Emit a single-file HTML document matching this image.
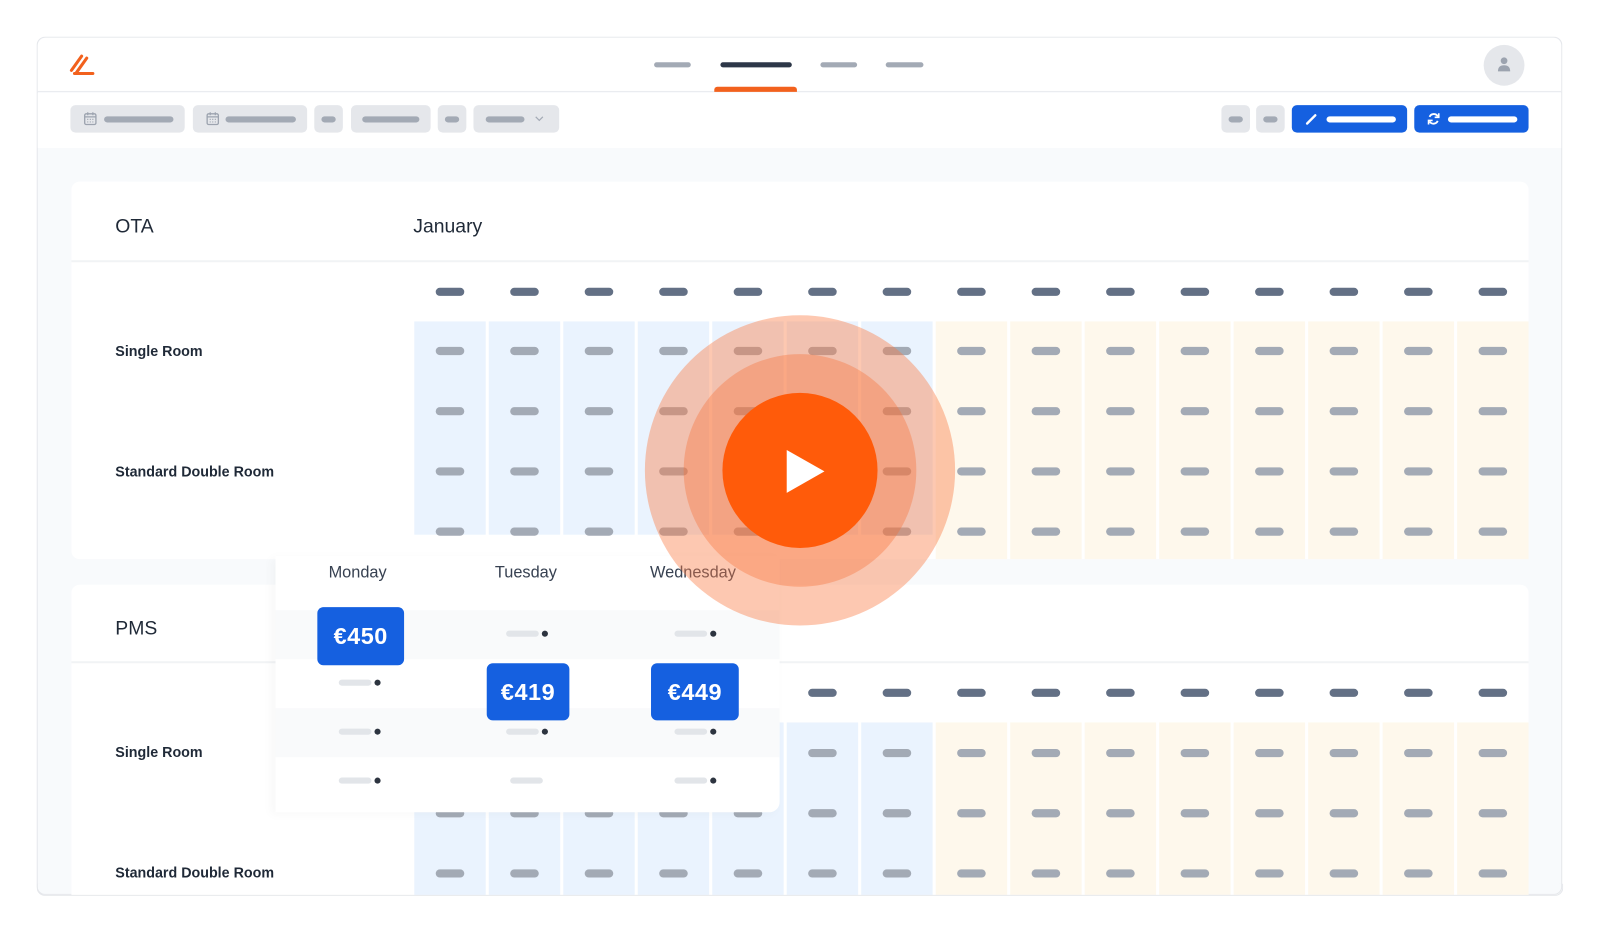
<!DOCTYPE html>
<html><head><meta charset="utf-8">
<style>
*{margin:0;padding:0;box-sizing:border-box}
html,body{width:1600px;height:932px;overflow:hidden;background:#fff;font-family:"Liberation Sans",sans-serif}
#s{position:absolute;left:0;top:0;width:1568px;height:914px;transform:scale(1.0204);transform-origin:0 0}
.a{position:absolute}
.d{position:absolute;height:8px;border-radius:4px}
.frame{left:36px;top:36px;width:1495px;height:841px;border:1px solid #e5e7eb;border-radius:8px;background:#f8fafc;overflow:hidden}
.card{background:#fff;border-radius:8px}
.lbl{font-size:14px;font-weight:bold;color:#1f2937}
.ttl{font-size:19px;color:#1f2937}
.btn{background:#e5e7eb;border-radius:5px;height:27px;top:103px}
.pb{background:#1560e0;border-radius:6px;color:#fff;font-size:23px;font-weight:bold;text-align:center;display:flex;align-items:center;justify-content:center;letter-spacing:.5px}
.day{font-size:16px;color:#374151;top:553px}
</style></head><body>
<div id="s">
<div class="a frame"></div>
<div class="a" style="left:37px;top:37px;width:1493px;height:53px;background:#fff;border-radius:8px 8px 0 0;border-bottom:1px solid #e5e7eb"></div>
<svg class="a" style="left:66px;top:52px" width="28" height="24" viewBox="0 0 28 24"><path d="M4 17 L14 3 M9 19 L19 5 M7 20 L25 20" stroke="#f2611d" stroke-width="3" stroke-linecap="round" fill="none"/></svg>
<div class="d" style="left:641px;top:61px;width:36px;height:5px;background:#a3aab5"></div>
<div class="d" style="left:706px;top:61px;width:70px;height:5px;background:#2d3748"></div>
<div class="d" style="left:804px;top:61px;width:36px;height:5px;background:#a3aab5"></div>
<div class="d" style="left:868px;top:61px;width:37px;height:5px;background:#a3aab5"></div>
<div class="a" style="left:700px;top:85px;width:81px;height:5px;background:#f2611d;border-radius:3px 3px 0 0"></div>
<div class="a" style="left:1454px;top:44px;width:40px;height:40px;border-radius:50%;background:#e5e7eb"></div>
<svg class="a" style="left:1466px;top:55px" width="16" height="16" viewBox="0 0 16 16"><circle cx="8" cy="4.5" r="3.3" fill="#9ca3af"/><path d="M2 15 Q2 9 8 9 Q14 9 14 15Z" fill="#9ca3af"/></svg>
<div class="a" style="left:37px;top:91px;width:1493px;height:54px;background:#fff"></div>
<div class="a btn" style="left:69px;width:112px"></div>
<div class="a btn" style="left:189px;width:112px"></div>
<div class="a btn" style="left:308px;width:28px"></div>
<div class="a btn" style="left:344px;width:78px"></div>
<div class="a btn" style="left:429px;width:28px"></div>
<div class="a btn" style="left:464px;width:84px"></div>
<svg class="a" style="left:82px;top:109px" width="13" height="14" viewBox="0 0 13 14"><rect x="1" y="2.5" width="11" height="10.5" rx="1.5" fill="none" stroke="#9ca3af" stroke-width="1.3"/><path d="M1 5.5H12M4 1V4M9 1V4M3.5 8h1M6 8h1M8.5 8h1M3.5 10.5h1M6 10.5h1M8.5 10.5h1" stroke="#9ca3af" stroke-width="1.2"/></svg>
<svg class="a" style="left:202px;top:109px" width="13" height="14" viewBox="0 0 13 14"><rect x="1" y="2.5" width="11" height="10.5" rx="1.5" fill="none" stroke="#9ca3af" stroke-width="1.3"/><path d="M1 5.5H12M4 1V4M9 1V4M3.5 8h1M6 8h1M8.5 8h1M3.5 10.5h1M6 10.5h1M8.5 10.5h1" stroke="#9ca3af" stroke-width="1.2"/></svg>
<div class="d" style="left:102px;top:114px;width:68px;height:6px;background:#a3aab5"></div>
<div class="d" style="left:221px;top:114px;width:69px;height:6px;background:#a3aab5"></div>
<div class="d" style="left:315px;top:114px;width:14px;height:6px;background:#a3aab5"></div>
<div class="d" style="left:355px;top:114px;width:56px;height:6px;background:#a3aab5"></div>
<div class="d" style="left:436px;top:114px;width:14px;height:6px;background:#a3aab5"></div>
<div class="d" style="left:476px;top:114px;width:38px;height:6px;background:#a3aab5"></div>
<svg class="a" style="left:524px;top:113px" width="9" height="7" viewBox="0 0 9 7"><path d="M1 1.5L4.5 5L8 1.5" stroke="#a3aab5" stroke-width="1.2" fill="none"/></svg>
<div class="a btn" style="left:1197px;width:28px"></div>
<div class="a btn" style="left:1231px;width:28px"></div>
<div class="d" style="left:1204px;top:114px;width:14px;height:6px;background:#a3aab5"></div>
<div class="d" style="left:1238px;top:114px;width:14px;height:6px;background:#a3aab5"></div>
<div class="a" style="left:1266px;top:103px;width:113px;height:27px;background:#1560e0;border-radius:5px"></div>
<div class="a" style="left:1386px;top:103px;width:112px;height:27px;background:#1560e0;border-radius:5px"></div>
<svg class="a" style="left:1279px;top:110px" width="13" height="13" viewBox="0 0 13 13"><path d="M2 11L10 3" stroke="#fff" stroke-width="2.4" stroke-linecap="round"/></svg>
<svg class="a" style="left:1398px;top:109px" width="14" height="15" viewBox="0 0 14 15"><path d="M11 5A4.5 4.5 0 0 0 3 5.5M3 10A4.5 4.5 0 0 0 11 9.5" stroke="#fff" stroke-width="1.8" fill="none"/><path d="M12 2V6H8M2 13V9H6" stroke="#fff" stroke-width="1.6" fill="none"/></svg>
<div class="d" style="left:1300px;top:114px;width:68px;height:6px;background:#fff"></div>
<div class="d" style="left:1419px;top:114px;width:68px;height:6px;background:#fff"></div>

<div class="a card" style="left:70px;top:178px;width:1428px;height:370px"></div>
<div class="a" style="left:70px;top:255px;width:1428px;height:2px;background:#f1f3f5"></div>
<div class="a ttl" style="left:113px;top:212px">OTA</div>
<div class="a ttl" style="left:405px;top:212px">January</div>
<div class="a lbl" style="left:113px;top:336px">Single Room</div>
<div class="a lbl" style="left:113px;top:454px">Standard Double Room</div>
<div class="a card" style="left:70px;top:573px;width:1428px;height:320px"></div>
<div class="a" style="left:70px;top:648px;width:1428px;height:2px;background:#f1f3f5"></div>
<div class="a ttl" style="left:113px;top:606px">PMS</div>
<div class="a lbl" style="left:113px;top:729px">Single Room</div>
<div class="a lbl" style="left:113px;top:847px">Standard Double Room</div>
<div id="grid"></div>
<div class="a" style="left:0;top:877px;width:1568px;height:40px;background:#fff"></div>
<div class="a" style="left:36px;top:866px;width:1496px;height:12px;border:1px solid #e5e7eb;border-top:none;border-radius:0 0 8px 8px"></div>

<div class="a" style="left:270px;top:545px;width:494px;height:251px;background:#fff;border-radius:0 0 10px 0;box-shadow:-4px 2px 10px rgba(0,0,0,.03)"></div>
<div class="a" style="left:270px;top:598px;width:494px;height:48px;background:#f9fafb"></div>
<div class="a" style="left:270px;top:694px;width:494px;height:48px;background:#f9fafb"></div>
<div class="a day" style="left:322px">Monday</div>
<div class="a day" style="left:485px">Tuesday</div>
<div class="a day" style="left:637px">Wednesday</div>
<div id="tt"></div>
<div class="a pb" style="left:311px;top:595px;width:85px;height:57px">€450</div>
<div class="a pb" style="left:477px;top:650px;width:81px;height:56px">€419</div>
<div class="a pb" style="left:638px;top:650px;width:86px;height:56px">€449</div>

<div class="a" style="left:632px;top:309px;width:304px;height:304px;border-radius:50%;background:rgba(250,125,70,.42)"></div>
<div class="a" style="left:670px;top:347px;width:228px;height:228px;border-radius:50%;background:rgba(245,110,50,.35)"></div>
<div class="a" style="left:708px;top:385px;width:152px;height:152px;border-radius:50%;background:#ff5b0a"></div>
<svg class="a" style="left:770px;top:440px" width="40" height="44" viewBox="0 0 40 44"><path d="M1 1L38 22L1 43Z" fill="#fff"/></svg>
</div>
<script>
var g='',cx=[];for(var i=0;i<15;i++)cx.push(441+i*73);
function card(top,hy,rows,cellTop,cellBot,blueBot){
 for(var i=0;i<15;i++){var x=cx[i]-35;var blue=i<7;
  var b=blue?(blueBot||cellBot):cellBot;
  g+='<div class="a" style="left:'+x+'px;top:'+cellTop+'px;width:70px;height:'+(b-cellTop)+'px;background:'+(blue?'#eaf3fe':'#fef8ec')+'"></div>';
  g+='<div class="d" style="left:'+(cx[i]-14)+'px;top:'+(hy-4)+'px;width:28px;background:#637085"></div>';
  rows.forEach(function(y){g+='<div class="d" style="left:'+(cx[i]-14)+'px;top:'+(y-4)+'px;width:28px;background:#a3aab5"></div>';});
 }}
card(178,286,[344,403,462,521],315,548,524);
card(573,679,[738,797,856],708,880);
document.getElementById('grid').innerHTML=g;
var t='';function it(x,y,dot){t+='<div class="d" style="left:'+(x-20)+'px;top:'+(y-3)+'px;width:32px;height:6px;background:#e2e5e9"></div>';if(dot)t+='<div class="a" style="left:'+(x+15)+'px;top:'+(y-3)+'px;width:6px;height:6px;border-radius:50%;background:#2d3440"></div>';}
it(352,669,1);it(352,717,1);it(352,765,1);
it(516,621,1);it(516,717,1);it(520,765,0);
it(681,621,1);it(681,717,1);it(681,765,1);
document.getElementById('tt').innerHTML=t;
</script>
</body></html>
